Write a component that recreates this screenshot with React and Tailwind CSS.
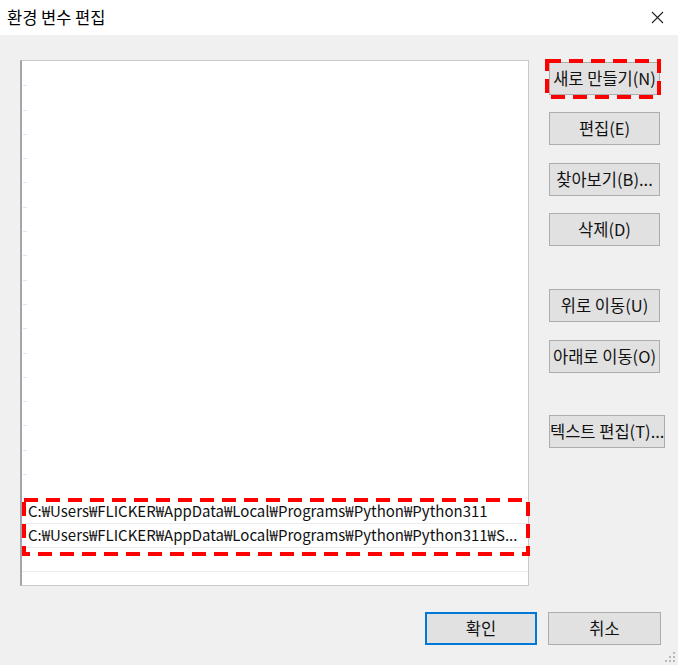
import React from 'react';

const font = { fontFamily: '"Noto Sans CJK KR", "Noto Sans", sans-serif' };

const paths = [
  'C:₩Users₩FLICKER₩AppData₩Local₩Programs₩Python₩Python311',
  'C:₩Users₩FLICKER₩AppData₩Local₩Programs₩Python₩Python311₩S...',
];

function DashBox({ className }) {
  return (
    <svg className={`pointer-events-none absolute ${className}`} width="100%" height="100%" preserveAspectRatio="none">
      <rect x="2" y="2" width="calc(100% - 4px)" height="calc(100% - 4px)" fill="none" stroke="#ff0000" strokeWidth="4" strokeDasharray="14 8" />
    </svg>
  );
}

function Btn({ children, w = 'w-[111px]', primary }) {
  return (
    <button
      className={`h-[33px] ${w} shrink-0 bg-[#e1e1e1] text-[16.5px] text-[#111] leading-none whitespace-nowrap ${
        primary ? 'border-2 border-[#0078d7]' : 'border border-[#adadad]'
      }`}
    >
      {children}
    </button>
  );
}

export default function App() {
  const empty = [...Array(18)];

  return (
    <div className="w-[678px] h-[665px] flex flex-col overflow-hidden" style={font}>
      {/* title bar */}
      <div className="h-[35px] bg-white flex items-center justify-between pl-[7px] pr-[14px]">
        <span className="text-[16.5px] text-black">환경 변수 편집</span>
        <svg width="13" height="13" viewBox="0 0 13 13">
          <path d="M1 1 L12 12 M12 1 L1 12" stroke="#222" strokeWidth="1.1" fill="none" />
        </svg>
      </div>

      <div className="relative flex-1 bg-[#f0f0f0] flex flex-col pt-[25px] pl-[20px]">
        <div className="flex">
          {/* list box */}
          <div className="relative shrink-0 w-[509px] h-[526px] bg-white border border-[#c8c8c8] border-l-2 border-l-[#a4a4ac] pt-[1px]">
            {empty.map((_, i) => (
              <div key={i} className="h-[24.3px] relative">
                <span className="absolute left-[1px] bottom-0 w-[4px] h-px bg-[#e4e4ec]"></span>
              </div>
            ))}
            {paths.map((p) => (
              <div key={p} className="h-[24.3px] flex items-center pl-[6px] border-b border-[#ececec] text-[15px] text-[#111] whitespace-nowrap">
                {p}
              </div>
            ))}
            <div className="h-[24.3px] border-b border-[#ececec]"></div>
            <DashBox className="left-0 top-[437px] !w-[508px] !h-[58px]" />
          </div>

          {/* buttons */}
          <div className="ml-[20px] pt-[2px] flex flex-col items-start">
            <div className="relative">
              <Btn>새로 만들기(N)</Btn>
              <DashBox className="-left-[4px] -top-[3px] !w-[116px] !h-[40px]" />
            </div>
            <div className="mt-[17px]"><Btn>편집(E)</Btn></div>
            <div className="mt-[18px]"><Btn>찾아보기(B)...</Btn></div>
            <div className="mt-[17px]"><Btn>삭제(D)</Btn></div>
            <div className="mt-[43px]"><Btn>위로 이동(U)</Btn></div>
            <div className="mt-[18px]"><Btn>아래로 이동(O)</Btn></div>
            <div className="mt-[42px]"><Btn w="w-[116px]">텍스트 편집(T)...</Btn></div>
          </div>
        </div>

        {/* bottom buttons */}
        <div className="mt-[26px] pr-[17px] flex justify-end gap-[11px]">
          <Btn w="w-[112px]" primary>확인</Btn>
          <Btn w="w-[113px]">취소</Btn>
        </div>

        {/* resize grip */}
        <svg className="absolute right-[2px] bottom-[2px]" width="12" height="12" viewBox="0 0 12 12">
          {[[8, 0], [4, 4], [8, 4], [0, 8], [4, 8], [8, 8]].map(([x, y]) => (
            <rect key={`${x}-${y}`} x={x + 1} y={y + 1} width="2" height="2" fill="#b8b8b8" />
          ))}
        </svg>
      </div>
    </div>
  );
}
